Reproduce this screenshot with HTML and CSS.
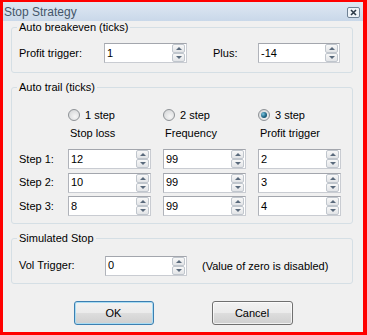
FILE: index.html
```html
<!DOCTYPE html>
<html lang="en">
  <head>
    <meta charset="UTF-8" />
    <meta name="viewport" content="width=device-width, initial-scale=1.0" />
    <link rel="stylesheet" href="styles.css">
  </head>
  <body>
    <div class="window">
      <div class="titlebar">
        <span class="title">Stop Strategy</span>
        <span class="close">
          <svg width="13" height="11" viewBox="0 0 13 11">
            <rect x="0.5" y="0.5" width="12" height="10" rx="1.5" fill="#eef3f8" stroke="#6f8194" />
            <path d="M4 3 L9 8 M9 3 L4 8" stroke="#2c3a48" stroke-width="1.6" />
          </svg>
        </span>
      </div>

      <div class="client">
        <fieldset class="group breakeven">
          <legend>Auto breakeven (ticks)</legend>
          <div class="row">
            <span class="lbl lbl-wide">Profit trigger:</span>
            <div class="spin"><span class="val">1</span><span class="arrows"><span class="up"></span><span class="down"></span></span></div>
            <span class="lbl lbl-plus">Plus:</span>
            <div class="spin spin-narrow"><span class="val">-14</span><span class="arrows"><span class="up"></span><span class="down"></span></span></div>
          </div>
        </fieldset>

        <fieldset class="group trail">
          <legend>Auto trail (ticks)</legend>
          <div class="trail-grid">
            <span></span>
            <span class="radio"><span class="dot"></span>1 step</span>
            <span class="radio"><span class="dot"></span>2 step</span>
            <span class="radio"><span class="dot checked"></span>3 step</span>

            <span></span>
            <span class="head">Stop loss</span>
            <span class="head">Frequency</span>
            <span class="head">Profit trigger</span>

            <span class="lbl">Step 1:</span>
            <div class="spin"><span class="val">12</span><span class="arrows"><span class="up"></span><span class="down"></span></span></div>
            <div class="spin"><span class="val">99</span><span class="arrows"><span class="up"></span><span class="down"></span></span></div>
            <div class="spin"><span class="val">2</span><span class="arrows"><span class="up"></span><span class="down"></span></span></div>

            <span class="lbl">Step 2:</span>
            <div class="spin"><span class="val">10</span><span class="arrows"><span class="up"></span><span class="down"></span></span></div>
            <div class="spin"><span class="val">99</span><span class="arrows"><span class="up"></span><span class="down"></span></span></div>
            <div class="spin"><span class="val">3</span><span class="arrows"><span class="up"></span><span class="down"></span></span></div>

            <span class="lbl">Step 3:</span>
            <div class="spin"><span class="val">8</span><span class="arrows"><span class="up"></span><span class="down"></span></span></div>
            <div class="spin"><span class="val">99</span><span class="arrows"><span class="up"></span><span class="down"></span></span></div>
            <div class="spin"><span class="val">4</span><span class="arrows"><span class="up"></span><span class="down"></span></span></div>
          </div>
        </fieldset>

        <fieldset class="group simulated">
          <legend>Simulated Stop</legend>
          <div class="row">
            <span class="lbl lbl-vol">Vol Trigger:</span>
            <div class="spin spin-narrow"><span class="val">0</span><span class="arrows"><span class="up"></span><span class="down"></span></span></div>
            <span class="note">(Value of zero is disabled)</span>
          </div>
        </fieldset>

        <div class="buttons">
          <button class="btn btn-ok">OK</button>
          <button class="btn btn-cancel">Cancel</button>
        </div>
      </div>
    </div>
  </body>
</html>
```

FILE: styles.css
```css
body {
  margin: 0;
  font-family: "Liberation Sans", Arial, sans-serif;
  font-size: 11px;
  color: #000;
}

.window {
  width: 367px;
  height: 335px;
  box-sizing: border-box;
  border-style: solid;
  border-color: #ff0000;
  border-width: 2px 4px 3px 3px;
  display: flex;
  flex-direction: column;
  background: #f0f0f0;
}

.titlebar {
  height: 19px;
  display: flex;
  align-items: center;
  justify-content: space-between;
  padding: 0 3px 0 1px;
  background: linear-gradient(to bottom, #dfe8f3, #c9d8e9);
}

.title {
  font-size: 12px;
  color: #45566a;
}

.close {
  display: flex;
  height: 11px;
  margin-top: 1px;
}

.client {
  flex: 1;
  display: flex;
  flex-direction: column;
}

.group {
  margin: 0 10px 0 8px;
  padding: 9px 7px 9px 7px;
  border: 1px solid #d5dfe5;
  border-radius: 3px;
  min-width: 0;
}

.group legend {
  padding: 0 2px;
  margin-left: -2px;
  line-height: 13px;
}

.trail {
  margin-top: 8px;
  padding-top: 14.5px;
  padding-bottom: 7px;
}

.simulated {
  margin-top: 8px;
  padding-top: 10.5px;
  padding-bottom: 7px;
}

.row {
  display: flex;
  align-items: center;
  height: 20px;
}

.lbl {
  line-height: 13px;
}

.lbl-wide {
  width: 85px;
}

.lbl-plus {
  width: 45px;
  margin-left: 26px;
}

.lbl-vol {
  width: 86px;
}

.note {
  margin-left: 15px;
}

.spin {
  width: 83px;
  height: 20px;
  box-sizing: border-box;
  display: flex;
  align-items: center;
  background: #fff;
  border: 1px solid #abadb3;
  border-color: #a3a6ad #c9ccd2 #c9ccd2 #b0b3ba;
}

.spin-narrow {
  width: 82px;
}

.val {
  flex: 1;
  padding-left: 2px;
  line-height: 13px;
}

.arrows {
  display: flex;
  flex-direction: column;
  width: 13px;
  height: 18px;
  margin-right: 1px;
}

.up,
.down {
  position: relative;
  flex: 1;
  box-sizing: border-box;
  border: 1px solid #c0c6cd;
  border-radius: 2px;
  background: linear-gradient(to bottom, #f8f8f8, #e2e4e7);
}

.up::after,
.down::after {
  content: "";
  position: absolute;
  left: 3px;
  top: 2px;
  border-left: 3px solid transparent;
  border-right: 3px solid transparent;
}

.up::after {
  border-bottom: 3px solid #5a6a7c;
}

.down::after {
  border-top: 3px solid #5a6a7c;
}

.trail-grid {
  display: grid;
  grid-template-columns: 37px 83px 83px 82px;
  grid-template-rows: 14.5px 19px 20px 20px 20px;
  column-gap: 12px;
  row-gap: 3.5px;
  align-items: center;
}

.radio {
  display: flex;
  align-items: center;
  gap: 5px;
  align-self: start;
  line-height: 13px;
}

.dot {
  position: relative;
  width: 12px;
  height: 12px;
  box-sizing: border-box;
  border-radius: 50%;
  border: 1px solid #8e9296;
  background: radial-gradient(circle at 60% 65%, #f6f6f6, #cfd1d3);
}

.dot.checked::after {
  content: "";
  position: absolute;
  left: 2px;
  top: 2px;
  width: 6px;
  height: 6px;
  border-radius: 50%;
  background: radial-gradient(circle at 35% 35%, #7cc6e0, #1f6584 55%, #0f3c52);
}

.head {
  align-self: start;
  line-height: 13px;
  padding-left: 2px;
}

.buttons {
  display: flex;
  justify-content: center;
  gap: 58px;
  margin-top: 17px;
}

.btn {
  height: 24px;
  width: 80px;
  font-family: inherit;
  font-size: 11px;
  color: #000;
  border: 1px solid #707070;
  border-radius: 3px;
  background: linear-gradient(to bottom, #f2f2f2 0%, #ebebeb 48%, #dddddd 52%, #cfcfcf 100%);
  box-shadow: inset 0 0 0 1px rgba(255, 255, 255, 0.7);
  padding: 0;
}

.btn-ok {
  border-color: #3c7fb1;
  box-shadow: inset 0 0 0 1px #a9dcf3;
}

.btn-cancel {
  width: 81px;
}
```
